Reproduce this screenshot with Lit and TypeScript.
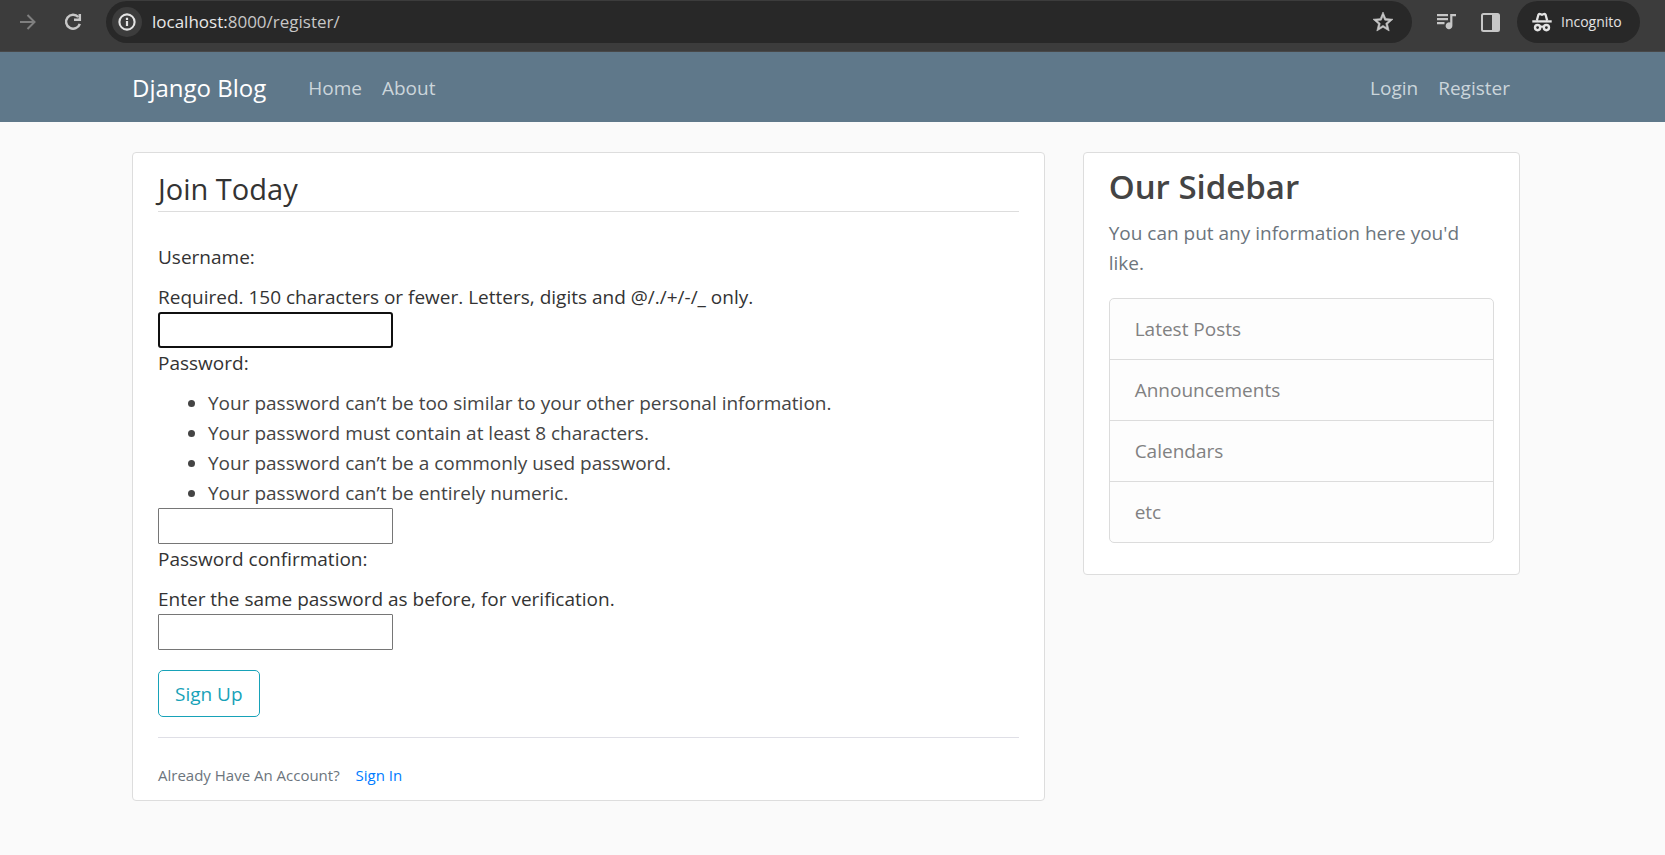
import { LitElement, html, css, nothing } from "lit";
import { customElement } from "lit/decorators.js";

@customElement("browser-bar")
class BrowserBar extends LitElement {
  static styles = css`
    :host {
      display: block;
      background: #3c3c3c;
      color: #e3e3e3;
      font-family: "Open Sans", sans-serif;
    }
    .bar {
      display: flex;
      align-items: flex-start;
      box-sizing: border-box;
      height: 52px;
      padding: 1px 25px 0 16px;
      border-bottom: 1px solid #484848;
    }
    button {
      display: flex;
      align-items: center;
      justify-content: center;
      margin: 0;
      padding: 0;
      border: 0;
      background: none;
      color: #c7c7c7;
      font: inherit;
    }
    svg {
      display: block;
    }
    .tool {
      width: 45px;
      height: 42px;
    }
    .forward {
      width: 24px;
      height: 42px;
      color: #7f7f7f;
    }
    .reload {
      width: 24px;
      height: 42px;
      margin: 0 21px 0 21px;
    }
    .address {
      display: flex;
      flex: 1;
      align-items: center;
      height: 42px;
      box-sizing: border-box;
      padding: 0 17px 0 6px;
      border-radius: 21px;
      background: #282828;
      margin-right: 11px;
    }
    .info {
      width: 30px;
      height: 30px;
      border-radius: 50%;
      background: #3c3c3c;
      color: #e3e3e3;
    }
    .url {
      flex: 1;
      padding-left: 10px;
      font-size: 17px;
      line-height: 24px;
      color: #c7c7c7;
    }
    .host {
      color: #e8e8e8;
    }
    .incognito {
      display: flex;
      align-items: center;
      justify-content: flex-start;
      box-sizing: border-box;
      width: 123px;
      height: 42px;
      margin-left: 4px;
      padding-left: 15px;
      gap: 9px;
      border-radius: 21px;
      background: #282828;
      color: #e3e3e3;
      font-size: 14px;
      line-height: 20px;
    }
  `;

  render() {
    return html`
      <div class="bar">
        <button class="forward" aria-label="Forward">
          <svg width="16" height="16" viewBox="0 0 16 16" fill="none" stroke="currentColor" stroke-width="2">
            <path d="M0 8H14M7.5 1L14.5 8L7.5 15" />
          </svg>
        </button>
        <button class="reload" aria-label="Reload">
          <svg width="24" height="24" viewBox="0 0 24 24" fill="none" stroke="currentColor" stroke-width="2.5">
            <path d="M17.3 7A7 7 0 1 0 18.8 13.8" />
            <path d="M18.8 4V9.8H13" />
          </svg>
        </button>
        <div class="address">
          <button class="info" aria-label="Site information">
            <svg width="18" height="18" viewBox="0 0 18 18">
              <circle cx="9" cy="9" r="7.6" fill="none" stroke="currentColor" stroke-width="2.1" />
              <path d="M7.9 8h2.2v5H7.9zM7.9 4.8h2.2v2.1H7.9z" fill="currentColor" />
            </svg>
          </button>
          <span class="url"><span class="host">localhost:</span>8000/register/</span>
          <button aria-label="Bookmark this page">
            <svg width="24" height="24" viewBox="0 0 24 24" fill="currentColor" stroke="currentColor" stroke-width="0.6">
              <path d="M22 9.24l-7.19-.62L12 2 9.19 8.63 2 9.24l5.46 4.73L5.82 21 12 17.27 18.18 21l-1.63-7.03zM12 15.4l-3.76 2.27 1-4.28-3.32-2.88 4.38-.38L12 6.1l1.71 4.04 4.38.38-3.32 2.88 1 4.28z" />
            </svg>
          </button>
        </div>
        <button class="tool" aria-label="Media controls">
          <svg width="24" height="24" viewBox="0 0 24 24" fill="currentColor">
            <path d="M14 4H3v2.3h11zM14 8H3v2.3h11zM3 14.3h7.5V12H3zM16.2 4v8.6A3.4 3.4 0 1 0 18.4 15.8V6.3H22V4z" />
          </svg>
        </button>
        <button class="tool" aria-label="Side panel">
          <svg width="19" height="19" viewBox="0 0 19 19">
            <rect x="1" y="1" width="17" height="17" rx="1.5" fill="none" stroke="currentColor" stroke-width="2" />
            <path d="M11 1h7v17h-7z" fill="currentColor" />
          </svg>
        </button>
        <button class="incognito">
          <svg width="20" height="20" viewBox="0 0 20 20" fill="none" stroke="currentColor">
            <path d="M4.8 8.6L6.4 2.8Q6.9 1.6 8 2L10 2.8L12 2Q13.1 1.6 13.6 2.8L15.2 8.6" stroke-width="2.3" />
            <path d="M0.3 9.4H19.7" stroke-width="2.3" />
            <circle cx="5.6" cy="15.6" r="2.6" stroke-width="2.4" />
            <circle cx="14.4" cy="15.6" r="2.6" stroke-width="2.4" />
            <path d="M8 15.2Q10 13.9 12 15.2" stroke-width="2" />
          </svg>
          Incognito
        </button>
      </div>
    `;
  }
}

@customElement("site-nav")
class SiteNav extends LitElement {
  static styles = css`
    :host {
      display: block;
      background: #5f788a;
    }
    .wrap {
      padding-right: 13px;
    }
    nav {
      display: flex;
      align-items: center;
      box-sizing: border-box;
      max-width: 1388px;
      min-height: 70px;
      margin: 0 auto;
      padding-top: 1px;
    }
    a {
      color: #cbd5db;
      text-decoration: none;
      font-size: 19px;
      line-height: 30px;
      padding: 10px;
    }
    .brand {
      margin-right: 32px;
      padding: 0;
      color: #fff;
      font-size: 24px;
      line-height: 38px;
    }
    .links {
      display: flex;
    }
    .end {
      margin-left: auto;
    }
  `;

  render() {
    return html`
      <div class="wrap">
        <nav>
          <a class="brand" href="#">Django Blog</a>
          <div class="links"><a href="#">Home</a><a href="#">About</a></div>
          <div class="links end"><a href="#">Login</a><a href="#">Register</a></div>
        </nav>
      </div>
    `;
  }
}

@customElement("register-form")
class RegisterForm extends LitElement {
  static styles = css`
    :host {
      display: block;
    }
    form {
      margin: 0;
    }
    fieldset {
      min-width: 0;
      margin: 0 0 20px;
      padding: 0;
      border: 0;
    }
    h1 {
      margin: 0 0 30px;
      border-bottom: 1px solid #dddddd;
      font-size: 29px;
      font-weight: 400;
      line-height: 45px;
    }
    label {
      display: block;
      margin-bottom: 10px;
    }
    p {
      margin: 0;
    }
    .rules {
      margin: 0;
      padding-left: 50px;
      color: #444;
    }
    input {
      display: block;
      box-sizing: border-box;
      width: 235px;
      height: 36px;
      margin: 0;
      padding: 0 4px;
      border: 1px solid #767676;
      border-radius: 1px;
      background: #fff;
      font: inherit;
    }
    .current {
      border: 2px solid #101010;
      border-radius: 3px;
      outline: none;
    }
    .submit {
      display: block;
      padding: 8px 16px 7px;
      border: 1px solid #17a2b8;
      border-radius: 5px;
      background: transparent;
      color: #17a2b8;
      font: inherit;
    }
    .foot {
      margin-top: 20px;
      padding: 25px 0 1px;
      border-top: 1px solid #dfdfe6;
      color: #6c757d;
      font-size: 15px;
      line-height: 24px;
    }
    .foot a {
      margin-left: 12px;
      color: #007bff;
      text-decoration: none;
    }
  `;

  private fields = [
    { id: "username", label: "Username:", type: "text", help: ["Required. 150 characters or fewer. Letters, digits and @/./+/-/_ only."] },
    {
      id: "password1",
      label: "Password:",
      type: "password",
      help: [
        "Your password can’t be too similar to your other personal information.",
        "Your password must contain at least 8 characters.",
        "Your password can’t be a commonly used password.",
        "Your password can’t be entirely numeric.",
      ],
    },
    { id: "password2", label: "Password confirmation:", type: "password", help: ["Enter the same password as before, for verification."] },
  ];

  render() {
    return html`
      <form @submit=${(e: Event) => e.preventDefault()}>
        <h1>Join Today</h1>
        <fieldset>
          ${this.fields.map(
            (f, i) => html`
              <label for=${f.id}>${f.label}</label>
              ${f.help.length > 1
                ? html`<ul class="rules" id="${f.id}-help">${f.help.map((h) => html`<li>${h}</li>`)}</ul>`
                : html`<p id="${f.id}-help">${f.help[0]}</p>`}
              <input class=${i === 0 ? "current" : nothing} id=${f.id} name=${f.id} type=${f.type} aria-describedby="${f.id}-help" />
            `
          )}
        </fieldset>
        <button class="submit" type="submit">Sign Up</button>
      </form>
      <div class="foot">Already Have An Account? <a href="#">Sign In</a></div>
    `;
  }
}

@customElement("side-panel")
class SidePanel extends LitElement {
  static styles = css`
    :host {
      display: block;
      color: #6c757d;
    }
    h2 {
      margin: 0 0 10px;
      color: #444;
      font-size: 33px;
      font-weight: 600;
      line-height: 42px;
    }
    p {
      margin: 0 0 20px;
    }
    ul {
      margin: 0 0 19px;
      padding: 0;
      list-style: none;
      border: 1px solid #dcdcdc;
      border-radius: 5px;
      background: #fdfdfd;
      color: #818182;
    }
    li {
      padding: 15px 25px;
    }
    li + li {
      border-top: 1px solid #dcdcdc;
    }
  `;

  render() {
    return html`
      <h2>Our Sidebar</h2>
      <p>You can put any information here you'd like.</p>
      <ul>
        ${["Latest Posts", "Announcements", "Calendars", "etc"].map((t) => html`<li>${t}</li>`)}
      </ul>
    `;
  }
}

@customElement("app-root")
class AppRoot extends LitElement {
  static styles = css`
    :host {
      display: block;
      min-height: 100vh;
      background: #fafafa;
      color: #333;
      font-family: "Open Sans", sans-serif;
      font-size: 19px;
      line-height: 30px;
    }
    main {
      padding: 30px 13px 0 0;
    }
    .row {
      display: flex;
      align-items: flex-start;
      max-width: 1426px;
      margin: 0 auto;
    }
    .col {
      box-sizing: border-box;
      padding: 0 19px;
      flex: 1;
      min-width: 0;
    }
    .wide {
      flex: 0 0 calc(100% * 2 / 3);
    }
    .card {
      padding: 13px 25px 12px;
      border: 1px solid #dddddd;
      border-radius: 4px;
      background: #fff;
    }
  `;

  render() {
    return html`
      <browser-bar></browser-bar>
      <site-nav></site-nav>
      <main>
        <div class="row">
          <div class="col wide"><register-form class="card"></register-form></div>
          <div class="col"><side-panel class="card"></side-panel></div>
        </div>
      </main>
    `;
  }
}
